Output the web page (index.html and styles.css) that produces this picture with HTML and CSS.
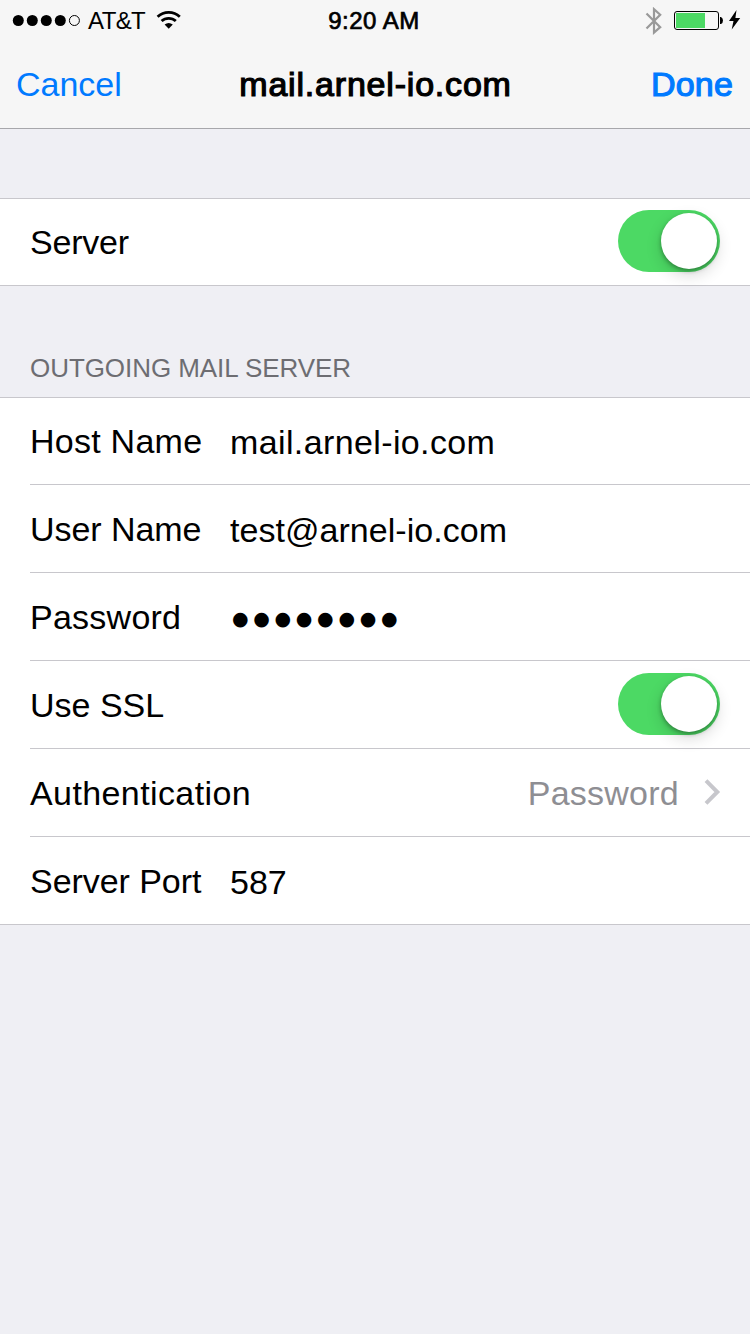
FILE: index.html
```html
<!DOCTYPE html>
<html lang="en">
<head>
<meta charset="utf-8">
<title>mail.arnel-io.com</title>
<link rel="stylesheet" href="styles.css">
</head>
<body>
<header class="top">
  <div class="status">
    <div class="status-left">
      <svg class="signal" width="68" height="12" viewBox="0 0 68 12"><circle cx="6.3" cy="6.5" r="5.5"/><circle cx="20.3" cy="6.5" r="5.5"/><circle cx="34.3" cy="6.5" r="5.5"/><circle cx="48.3" cy="6.5" r="5.5"/><circle cx="62.4" cy="6.500" r="5" fill="none" stroke="#000"/></svg>
      <span class="carrier">AT&amp;T</span>
      <svg class="wifi" width="26" height="19" viewBox="0 0 26 19"><g fill="none" stroke="#000" stroke-width="2.8"><path d="M1.600 6.700a16.200 16.200 0 0 1 22.200 0"/><path d="M5.600 11.100a10.400 10.400 0 0 1 14.200 0"/></g><path d="M8.600 14.600q4.100-3.400 8.200 0l-4.100 4.200z"/></svg>
    </div>
    <div class="clock medium">9:20 AM</div>
    <div class="status-right">
      <svg width="18" height="28" viewBox="0 0 18 28"><path d="M1.500 6.500l13.700 13.700L9 25.600V2.200l6.200 5.600L1.500 21.500" fill="none" stroke="#999" stroke-width="2.200"/></svg>
      <svg class="battery" width="50" height="20" viewBox="0 0 50 20"><rect x=".5" y=".5" width="44" height="18" rx="2.5" fill="none" stroke="#000"/><rect x="2" y="2" width="29" height="15" fill="#4cd964"/><path d="M46 6h1q2 1 2 3.500t-2 3.500h-1z"/></svg>
      <svg class="bolt" width="12" height="20" viewBox="0 0 12 20"><path d="M7.500 0L0 11h4.500L2.700 19.500 11.200 8H6.400z"/></svg>
    </div>
  </div>
  <nav class="nav">
    <a class="cancel">Cancel</a>
    <h1 class="title medium">mail.arnel-io.com</h1>
    <a class="done medium">Done</a>
  </nav>
</header>
<main>
  <section class="group group-first">
    <div class="row"><span class="label server">Server</span><span class="switch"><span class="knob"></span></span></div>
  </section>
  <h2 class="heading">OUTGOING MAIL SERVER</h2>
  <section class="group">
    <div class="row"><span class="label host">Host Name</span><span class="value mail">mail.arnel-io.com</span></div>
    <div class="row"><span class="label user">User Name</span><span class="value test">test@arnel-io.com</span></div>
    <div class="row"><span class="label pass">Password</span><span class="bullets">●●●●●●●●</span></div>
    <div class="row"><span class="label ssl">Use SSL</span><span class="switch"><span class="knob"></span></span></div>
    <div class="row"><span class="label auth">Authentication</span><span class="detail">Password</span><svg class="chevron" width="17" height="28" viewBox="0 0 17 28"><path d="M2 2.700L13.300 14 2 25.300" fill="none" stroke="#c7c7cc" stroke-width="4"/></svg></div>
    <div class="row"><span class="label port">Server Port</span><span class="value number">587</span></div>
  </section>
</main>
</body>
</html>
```
FILE: styles.css
```css
* { box-sizing: border-box; }
body {
  margin: 0;
  min-height: 1334px;
  background: #efeff4;
  color: #000;
  font: 34px/86px "Liberation Sans", Arial, sans-serif;
  white-space: nowrap;
}
svg { display: block; flex: none; }
.top { height: 129px; background: #f6f6f6; border-bottom: 1px solid #a7a7ab; }
.medium { -webkit-text-stroke: 1.2px currentColor; font-weight: 400; }
.status {
  display: grid;
  grid-template-columns: 1fr auto 1fr;
  height: 40px;
  font-size: 24px;
  line-height: 42px;
}
.status-left { display: flex; padding-left: 12px; }
.signal { margin-top: 14px; }
.carrier { width: 64px; margin-left: 8px; letter-spacing: -.6px; }
.wifi { margin: 10px 0 0 4px; }
.clock { padding-right: 2px; letter-spacing: .5px; -webkit-text-stroke-width: .7px; }
.status-right { display: flex; justify-content: flex-end; padding: 7px 9px 0 0; }
.battery { margin: 4px 0 0 11px; }
.bolt { margin: 3px 0 0 5px; }
.nav {
  display: grid;
  grid-template-columns: 1fr auto 1fr;
  height: 88px;
  padding: 0 17px 0 16px;
  line-height: 88px;
}
.cancel, .done { color: #007aff; }
.done { text-align: right; letter-spacing: .2px; }
.title { margin: 0; padding-left: 2px; font-size: 34px; letter-spacing: .8px; }
.group { background: #fff; border-top: 1px solid #c8c7cc; border-bottom: 1px solid #c8c7cc; }
.group-first { margin-top: 69px; }
.row { display: flex; align-items: center; height: 88px; margin-left: 30px; padding-right: 30px; border-bottom: 1px solid #c8c7cc; }
.row:first-child { height: 87px; }
.row:last-child { height: 87px; border-bottom: 0; }
.group-first .row:first-child { height: 86px; }
.group-first .switch { margin-bottom: 2px; }
.label { width: 200px; }
.value { padding-top: 2px; }
.server { letter-spacing: -.2px; }
.host, .pass { letter-spacing: .25px; }
.user, .port { letter-spacing: -.05px; }
.mail { letter-spacing: .38px; }
.test { letter-spacing: .04px; }
.auth { width: 240px; letter-spacing: .4px; }
.switch { width: 102px; height: 62px; margin: 0 0 1px auto; padding: 3px; border-radius: 31px; background: #4cd964; }
.knob { display: block; width: 56px; height: 56px; margin-left: auto; border-radius: 50%; background: #fff; box-shadow: 0 6px 16px rgba(0,0,0,.16), 0 2px 4px rgba(0,0,0,.32); }
.heading { margin: 0; height: 111px; padding: 60px 0 0 30px; color: #6d6d72; font-size: 26px; font-weight: 400; line-height: 44px; letter-spacing: -.06px; }
.bullets { padding: 2px 0 0 2px; font-family: "DejaVu Sans", sans-serif; font-size: 19px; letter-spacing: 4.700px; }
.detail { margin-left: auto; color: #8e8e93; letter-spacing: .25px; }
.chevron { margin: 0 -1px 2px 25px; }
```
